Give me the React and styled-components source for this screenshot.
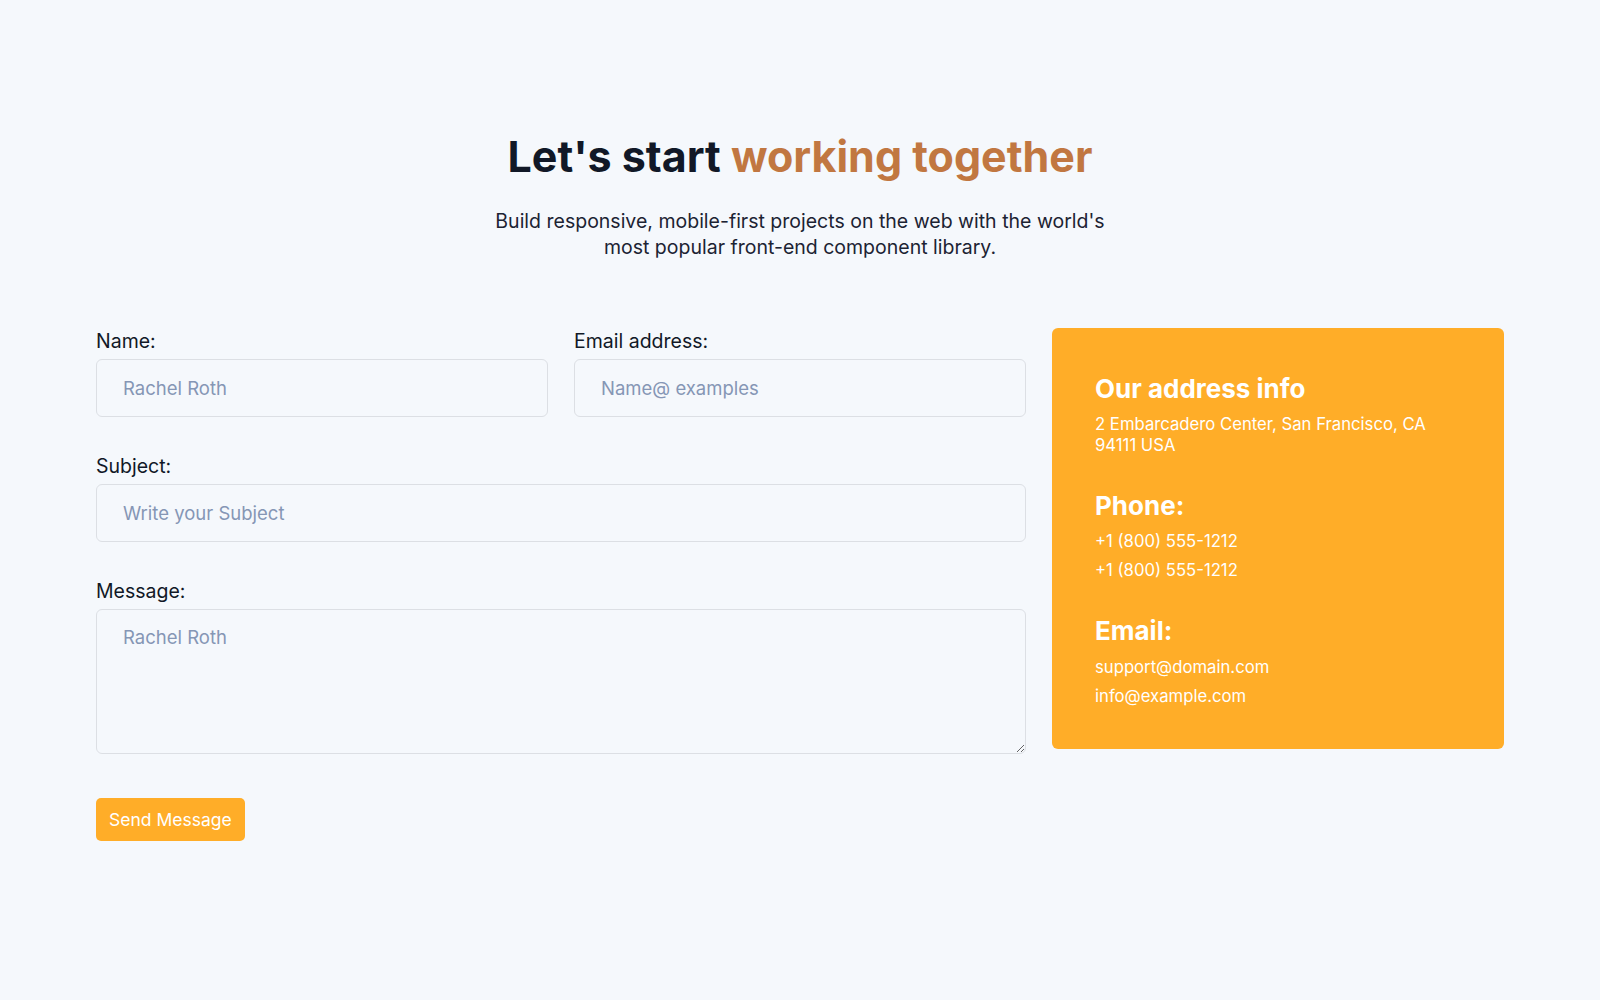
import React from 'react';
import styled, { createGlobalStyle } from 'styled-components';

const GlobalStyle = createGlobalStyle`
  * {
    box-sizing: border-box;
  }
  body {
    margin: 0;
    background: #f5f8fc;
    font-family: Inter, 'Noto Sans', sans-serif;
    color: #111827;
  }
`;

export default function App() {
  return (
    <>
      <GlobalStyle />
      <Section>
        <Header>
          <Title>
            Let's start <Accent>working together</Accent>
          </Title>
          <Lead>
            Build responsive, mobile-first projects on the web with the world's
            <br />
            most popular front-end component library.
          </Lead>
        </Header>

        <Row>
          <Form onSubmit={(e) => e.preventDefault()}>
            <Field>
              <Label htmlFor='name'>Name:</Label>
              <Input id='name' type='text' placeholder='Rachel Roth' />
            </Field>
            <Field>
              <Label htmlFor='email'>Email address:</Label>
              <Input id='email' type='email' placeholder='Name@ examples' />
            </Field>
            <Field $wide>
              <Label htmlFor='subject'>Subject:</Label>
              <Input id='subject' type='text' placeholder='Write your Subject' />
            </Field>
            <Field $wide>
              <Label htmlFor='message'>Message:</Label>
              <TextArea id='message' placeholder='Rachel Roth' />
            </Field>
            <Actions>
              <SendButton type='submit'>Send Message</SendButton>
            </Actions>
          </Form>

          <InfoCard>
            <InfoBlock>
              <InfoTitle>Our address info</InfoTitle>
              <InfoText>
                2 Embarcadero Center, San Francisco, CA
                <br />
                94111 USA
              </InfoText>
            </InfoBlock>
            <InfoBlock>
              <InfoTitle>Phone:</InfoTitle>
              <InfoText>+1 (800) 555-1212</InfoText>
              <InfoText>+1 (800) 555-1212</InfoText>
            </InfoBlock>
            <InfoBlock>
              <InfoTitle>Email:</InfoTitle>
              <InfoText>support@domain.com</InfoText>
              <InfoText>info@example.com</InfoText>
            </InfoBlock>
          </InfoCard>
        </Row>
      </Section>
    </>
  );
}

const Section = styled.section`
  max-width: 1440px;
  margin: 0 auto;
  padding: 131px 16px 120px;
`;
const Header = styled.div`
  text-align: center;
  margin-bottom: 68px;
`;
const Title = styled.h1`
  margin: 0 0 25px;
  font-size: 43px;
  line-height: 1.2;
  font-weight: 700;
  color: #111827;
`;
const Accent = styled.span`
  color: #c17741;
`;
const Lead = styled.p`
  margin: 0;
  font-size: 19.5px;
  line-height: 26px;
  color: #1c2333;
`;
const Row = styled.div`
  display: grid;
  grid-template-columns: repeat(3, 1fr);
  column-gap: 26px;
  align-items: start;
`;
const Form = styled.form`
  grid-column: span 2;
  display: grid;
  grid-template-columns: 1fr 1fr;
  column-gap: 26px;
  row-gap: 36px;
`;
const Field = styled.div`
  display: flex;
  flex-direction: column;
  gap: 4px;
  grid-column: ${(p) => (p.$wide ? 'span 2' : 'auto')};
`;
const Label = styled.label`
  font-size: 19.5px;
  line-height: 27px;
  color: #111827;
`;
const Input = styled.input`
  width: 100%;
  height: 58px;
  padding: 0 26px;
  font-family: inherit;
  font-size: 18.5px;
  color: #111827;
  background: transparent;
  border: 1px solid #dcdfe4;
  border-radius: 6px;
  outline: none;

  &::placeholder {
    color: #8596b5;
  }
`;
const TextArea = styled.textarea`
  width: 100%;
  height: 145px;
  padding: 14px 26px;
  font-family: inherit;
  font-size: 18.5px;
  line-height: 1.5;
  color: #111827;
  background: transparent;
  border: 1px solid #dcdfe4;
  border-radius: 6px;
  outline: none;
  display: block;

  &::placeholder {
    color: #8596b5;
  }
`;
const Actions = styled.div`
  grid-column: span 2;
  padding-top: 8px;
`;
const SendButton = styled.button`
  padding: 8px 13px;
  font-family: inherit;
  font-size: 17.5px;
  line-height: 27px;
  color: #fff;
  background: #ffad28;
  border: none;
  border-radius: 5px;
  cursor: pointer;
`;
const InfoCard = styled.aside`
  display: flex;
  flex-direction: column;
  gap: 34px;
  padding: 45px 43px 42px;
  background: #ffad28;
  border-radius: 6px;
  color: #fff;
`;
const InfoBlock = styled.div`
  display: flex;
  flex-direction: column;
  gap: 8.5px;
`;
const InfoTitle = styled.h3`
  margin: 0 0 1.5px;
  font-size: 26px;
  line-height: 1.2;
  font-weight: 700;
`;
const InfoText = styled.p`
  margin: 0;
  font-size: 16.7px;
  line-height: 21px;
`;
